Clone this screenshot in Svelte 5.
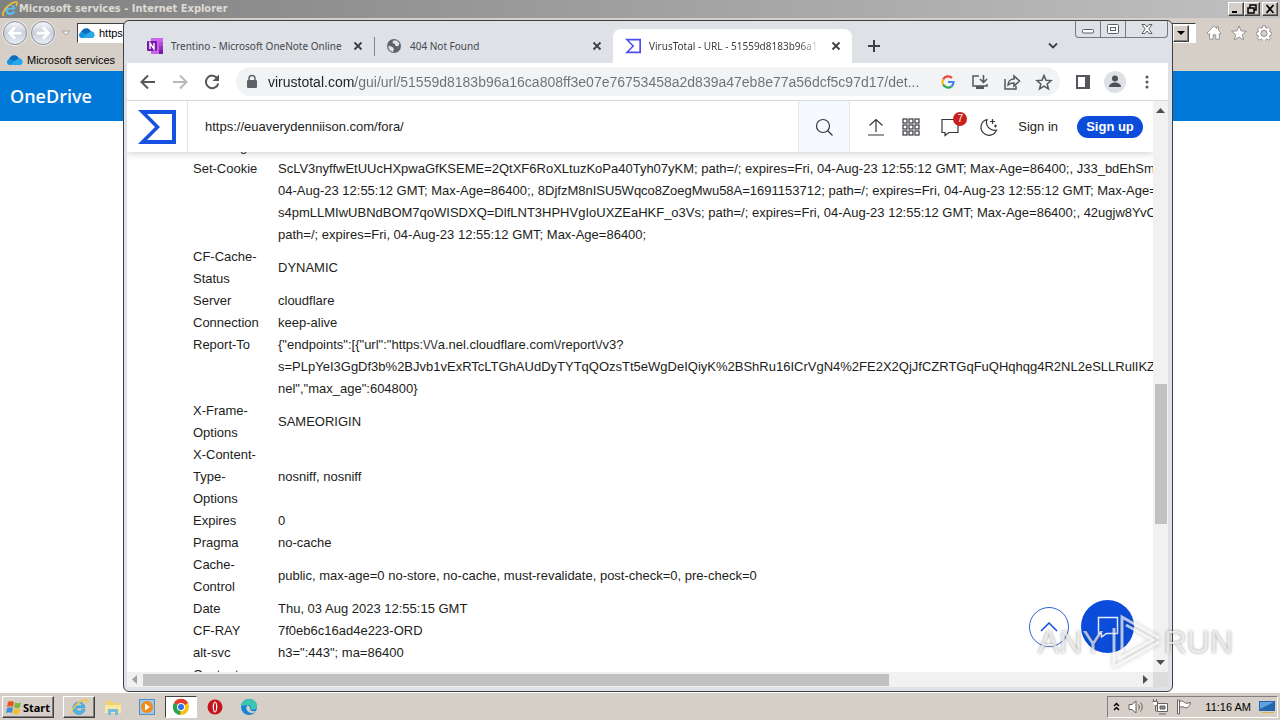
<script>
  let pageUrl = $state('https://euaverydenniison.com/fora/');
  let address = $state('virustotal.com/gui/url/51559d8183b96a16ca808ff3e07e76753458a2d839a47eb8e77a56dcf5c97d17/det...');

  const headers = [
    { name: ['Encoding'], value: [''] },
    {
      name: ['Set-Cookie'],
      top: true,
      value: [
        'ScLV3nyffwEtUUcHXpwaGfKSEME=2QtXF6RoXLtuzKoPa40Tyh07yKM; path=/; expires=Fri, 04-Aug-23 12:55:12 GMT; Max-Age=86400;, J33_bdEhSmc',
        '04-Aug-23 12:55:12 GMT; Max-Age=86400;, 8DjfzM8nISU5Wqco8ZoegMwu58A=1691153712; path=/; expires=Fri, 04-Aug-23 12:55:12 GMT; Max-Age=',
        's4pmLLMIwUBNdBOM7qoWISDXQ=DlfLNT3HPHVgIoUXZEaHKF_o3Vs; path=/; expires=Fri, 04-Aug-23 12:55:12 GMT; Max-Age=86400;, 42ugjw8YvCTY',
        'path=/; expires=Fri, 04-Aug-23 12:55:12 GMT; Max-Age=86400;'
      ]
    },
    { name: ['CF-Cache-', 'Status'], value: ['DYNAMIC'] },
    { name: ['Server'], value: ['cloudflare'] },
    { name: ['Connection'], value: ['keep-alive'] },
    {
      name: ['Report-To'],
      top: true,
      value: [
        '{"endpoints":[{"url":"https:\\/\\/a.nel.cloudflare.com\\/report\\/v3?',
        's=PLpYeI3GgDf3b%2BJvb1vExRTcLTGhAUdDyTYTqQOzsTt5eWgDeIQiyK%2BShRu16ICrVgN4%2FE2X2QjJfCZRTGqFuQHqhqg4R2NL2eSLLRulIKZ31y',
        'nel","max_age":604800}'
      ]
    },
    { name: ['X-Frame-', 'Options'], value: ['SAMEORIGIN'] },
    { name: ['X-Content-', 'Type-', 'Options'], value: ['nosniff, nosniff'] },
    { name: ['Expires'], value: ['0'] },
    { name: ['Pragma'], value: ['no-cache'] },
    { name: ['Cache-', 'Control'], value: ['public, max-age=0 no-store, no-cache, must-revalidate, post-check=0, pre-check=0'] },
    { name: ['Date'], value: ['Thu, 03 Aug 2023 12:55:15 GMT'] },
    { name: ['CF-RAY'], value: ['7f0eb6c16ad4e223-ORD'] },
    { name: ['alt-svc'], value: ['h3=":443"; ma=86400'] },
    { name: ['Content-', 'Type'], value: [''] }
  ];
</script>

{#snippet cloud()}
  <svg class="cloud" viewBox="0 0 16 12" aria-hidden="true">
    <path d="M4 10a4 4 0 0 1-.5-7A5 5 0 0 1 12 4.500a3.300 3.300 0 0 1 .7 6.500H4z" fill="#0f6cbd" />
    <path d="M0 8a3 3 0 0 1 3.500-3l9 6H3A3 3 0 0 1 0 8z" fill="#1490df" />
    <path d="M7 7l5-2.500A3.300 3.300 0 0 1 13 11H4z" fill="#28a8ea" />
  </svg>
{/snippet}

{#snippet closeTab(title)}
  <button class="close" aria-label="Close {title}">
    <svg width="16" height="16" viewBox="0 0 16 16"><path d="M4.500 4.500l7 7M11.500 4.500l-7 7" stroke="#3c4043" stroke-width="1.800" /></svg>
  </button>
{/snippet}

{#snippet sigma(size, color)}
  <svg width={size} height={size} viewBox="0 0 38 38" aria-hidden="true">
    <path fill-rule="evenodd" d="M0 2h38v34H0l17-17zM9 6l13 13L9 32h25V6z" fill={color} />
  </svg>
{/snippet}

<div class="desktop">
  <section class="ie">
    <header class="ie-title">
      <svg width="16" height="16" viewBox="0 0 16 16" aria-hidden="true">
        <path d="M13 8.500H5.500a3 3 0 0 0 5.500 1.800h2.500A5.300 5.300 0 1 1 13.400 7z M5.600 6.900h5.100a2.600 2.600 0 0 0-5.100 0z" fill="#58bdf3" />
        <path d="M1.500 15C-1 12 6 2 14 1c2 0 1 3 0 4" fill="none" stroke="#f2c32d" stroke-width="1.500" />
      </svg>
      <h1>Microsoft services - Internet Explorer</h1>
      <div class="classic-buttons">
        <button aria-label="Minimize"><svg viewBox="0 0 12 10"><path d="M2 8h5" stroke="#000" stroke-width="2" /></svg></button>
        <button aria-label="Restore"><svg viewBox="0 0 12 10"><path d="M4 4V1h6v5H8M2 4h6v5H2z" fill="none" stroke="#000" stroke-width="1.500" /></svg></button>
        <button class="apart" aria-label="Close"><svg viewBox="0 0 12 10"><path d="M2.500 1l7 8M9.500 1l-7 8" stroke="#000" stroke-width="1.800" /></svg></button>
      </div>
    </header>

    <div class="ie-nav">
      <button class="round" aria-label="Back"><svg viewBox="0 0 24 24"><path d="M19 12H7M12 6l-6 6 6 6" /></svg></button>
      <button class="round" aria-label="Forward"><svg viewBox="0 0 24 24"><path d="M5 12h12M12 6l6 6-6 6" /></svg></button>
      <svg class="recent" width="10" height="6" viewBox="0 0 10 6" aria-hidden="true"><path d="M1 1h8L5 5z" fill="#eee" stroke="#aaa59d" /></svg>
      <div class="ie-address">
        {@render cloud()}
        <input aria-label="Address" value="https://" />
        <button class="drop" aria-label="Show addresses"><svg width="8" height="4" viewBox="0 0 8 4"><path d="M0 0h8L4 4z" /></svg></button>
      </div>
      <div class="ie-tools">
        <button aria-label="Home"><svg viewBox="0 0 18 18"><path d="M1 9l8-8 3 3V2h2v4l3 3-1 1.500-1-1V16h-4v-5H8v5H4V9.500l-1 1z" /></svg></button>
        <button aria-label="Favorites"><svg viewBox="0 0 18 18"><path d="M9 1l2.300 5.600 6 .4-4.600 3.900 1.500 5.900L9 13.600l-5.200 3.200 1.500-5.900L.7 7l6-.4z" /></svg></button>
        <button aria-label="Tools"><svg viewBox="0 0 18 18"><path fill-rule="evenodd" d="M7.500 1h3l.4 2 1.600.7 1.700-1.100 2.100 2.100-1.100 1.700.6 1.600 2 .4v2.600l-2 .5-.6 1.600 1.100 1.700-2.100 2.100-1.700-1.100-1.600.6-.4 2h-3l-.4-2-1.600-.6-1.700 1.100-2.100-2.100 1.100-1.700-.6-1.600-2-.5V8.400l2-.4.6-1.600-1.100-1.700 2.100-2.100 1.700 1.100L7.100 3zM9 6a3.500 3.500 0 1 0 0 7 3.500 3.500 0 0 0 0-7z" /></svg></button>
      </div>
    </div>

    <div class="ie-favorites">
      {@render cloud()}
      <a href="#services">Microsoft services</a>
    </div>

    <div class="onedrive">OneDrive</div>
    <div class="ie-page"></div>
  </section>

  <section class="chrome">
    <div class="tabs">
      <div class="tab">
        <svg width="16" height="16" viewBox="0 0 16 16" aria-hidden="true">
          <path d="M4 0h12v16H4z" fill="#ca64ea" /><path d="M12 4h4v4h-4z" fill="#ae4bd5" /><path d="M12 8h4v4h-4z" fill="#9332bf" /><path d="M12 12h4v4h-4z" fill="#7719aa" />
          <rect y="3" width="10" height="10" rx="1" fill="#7719aa" /><path d="M3 11V5l4 6V5" fill="none" stroke="#fff" stroke-width="1.400" />
        </svg>
        <span class="tab-title">Trentino - Microsoft OneNote Online</span>
        {@render closeTab('Trentino')}
      </div>
      <div class="tab divided">
        <svg width="16" height="16" viewBox="0 0 16 16" aria-hidden="true">
          <circle cx="8" cy="8" r="7" fill="#5f6368" />
          <path d="M2.500 7.500l4 1.500 1.500 2-1 3a6 6 0 0 1-4.500-6.500zM7 2.500h4l2.500 3-1.500 3-3-1V6L6.500 5z" fill="#dee1e6" />
        </svg>
        <span class="tab-title">404 Not Found</span>
        {@render closeTab('404 Not Found')}
      </div>
      <div class="tab active">
        {@render sigma(16, '#4a4ff0')}
        <span class="tab-title fade">VirusTotal - URL - 51559d8183b96a1</span>
        {@render closeTab('VirusTotal')}
      </div>
      <button class="new-tab" aria-label="New tab"><svg width="14" height="14" viewBox="0 0 14 14"><path d="M7 1v12M1 7h12" stroke="#3c4043" stroke-width="2" /></svg></button>
      <button class="tab-search" aria-label="Search tabs"><svg width="12" height="8" viewBox="0 0 12 8"><path d="M2 1.500l4 4 4-4" fill="none" stroke="#3c4043" stroke-width="1.800" /></svg></button>
      <div class="frame-buttons">
        <button aria-label="Minimize"><svg width="14" height="12" viewBox="0 0 14 12"><rect x="1.500" y="6.500" width="11" height="3.500" rx="1" /></svg></button>
        <button aria-label="Maximize"><svg width="14" height="12" viewBox="0 0 14 12"><rect x="1.500" y="1.500" width="11" height="9" rx="1" /><rect x="4.500" y="4.500" width="5" height="3" /></svg></button>
        <button class="wide" aria-label="Close"><svg width="14" height="12" viewBox="0 0 14 12"><path d="M2 1.500h3L7 4l2-2.500h3L8.800 6l3.200 4.500H9L7 8l-2 2.500H2L5.200 6z" /></svg></button>
      </div>
    </div>

    <div class="toolbar">
      <button aria-label="Back"><svg viewBox="0 0 20 20"><path d="M17 10H4M10 3.500L3.500 10l6.500 6.500" /></svg></button>
      <button class="off" aria-label="Forward"><svg viewBox="0 0 20 20"><path d="M3 10h13M10 3.500l6.500 6.500-6.500 6.500" /></svg></button>
      <button aria-label="Reload"><svg viewBox="0 0 20 20"><path d="M15.500 6.500A6.300 6.300 0 1 0 16.300 11.500" /><path d="M17 2.500V9h-6.500z" class="solid" /></svg></button>
      <div class="omnibox">
        <svg width="16" height="16" viewBox="0 0 16 16" aria-hidden="true"><rect x="3" y="6" width="10" height="8" rx="1" fill="#5f6368" /><path d="M5 6.500V4.500a3 3 0 0 1 6 0v2" fill="none" stroke="#5f6368" stroke-width="1.500" /></svg>
        <input aria-label="Address and search bar" bind:value={address} />
        <button aria-label="Search with Google">
          <svg viewBox="0 0 20 20" class="google">
            <path d="M14 6A5.500 5.500 0 0 0 5.100 7.500" stroke="#ea4335" /><path d="M5.100 7.500a5.500 5.500 0 0 0 0 5" stroke="#fbbc05" /><path d="M5.100 12.500a5.500 5.500 0 0 0 8.400 1.800" stroke="#34a853" /><path d="M10 10h5.500a5.500 5.500 0 0 1-2 4.300" stroke="#4285f4" />
          </svg>
        </button>
        <button aria-label="Install app"><svg viewBox="0 0 20 20"><path d="M9 4H3v10h14v-2M13.500 3v7M10 7l3.500 3.500L17 7" class="line" /><path d="M6 14h8v3H6z" class="solid" /></svg></button>
        <button aria-label="Share"><svg viewBox="0 0 20 20"><path d="M3 7v10h11v-3M6 13c0-4 3-6 6-6V4l5.500 5-5.500 5v-3c-3 0-4.500.5-6 2z" class="line" /></svg></button>
        <button aria-label="Bookmark"><svg viewBox="0 0 20 20"><path d="M10 3.500l2 4.700 5 .4-3.800 3.300 1.200 5L10 14.200l-4.400 2.700 1.200-5L3 8.600l5-.4z" class="line" /></svg></button>
      </div>
      <button aria-label="Side panel"><svg viewBox="0 0 20 20"><rect x="4" y="4" width="12" height="12" /><path d="M12 4h4v12h-4z" class="solid" /></svg></button>
      <button class="avatar" aria-label="Profile"><svg viewBox="0 0 22 22"><circle cx="11" cy="7.500" r="3" /><path d="M5 16c0-6 12-6 12 0z" /></svg></button>
      <button aria-label="Menu"><svg viewBox="0 0 20 20" class="dots"><circle cx="10" cy="5" r="1.500" /><circle cx="10" cy="10" r="1.500" /><circle cx="10" cy="15" r="1.500" /></svg></button>
    </div>

    <div class="viewport">
      <main class="page">
        <header class="vt-header">
          <a class="vt-logo" href="#home" aria-label="VirusTotal">{@render sigma(38, '#1651e0')}</a>
          <input class="vt-input" aria-label="Search" bind:value={pageUrl} />
          <button class="vt-search" aria-label="Run search"><svg width="20" height="20" viewBox="0 0 20 20"><circle cx="9" cy="9" r="6.500" /><path d="M13.500 13.500l5 5" /></svg></button>
          <nav class="vt-nav">
            <div class="vt-pair">
              <button aria-label="Upload"><svg viewBox="0 0 20 20"><path d="M2 18h16M10 15V2.500M3.500 8.500l6.500-6 6.500 6" /></svg></button>
              <button aria-label="Apps">
                <svg viewBox="0 0 20 20">
                  {#each [2, 8, 14] as y}
                    {#each [2, 8, 14] as x}
                      <rect {x} {y} width="4" height="4" />
                    {/each}
                  {/each}
                </svg>
              </button>
            </div>
            <button class="comments" aria-label="Notifications">
              <svg viewBox="0 0 20 20"><path d="M2 2.500h16v13H9L5 18.500v-3H2z" /></svg>
              <span class="badge">7</span>
            </button>
            <button aria-label="Dark mode"><svg viewBox="0 0 20 20"><path d="M8 2.500A8 8 0 1 0 17.500 13 8 8 0 0 1 8 2.500zM13.500 2v5M11 4.500h5M16.500 7.500v3M15 9h3" /></svg></button>
            <a class="sign-in" href="#signin">Sign in</a>
            <button class="sign-up">Sign up</button>
          </nav>
        </header>

        <div class="details">
          <table>
            <tbody>
              {#each headers as row}
                <tr class:top={row.top}>
                  <th scope="row">{#each row.name as line}<div>{line}</div>{/each}</th>
                  <td>{#each row.value as line}<div>{line}</div>{/each}</td>
                </tr>
              {/each}
            </tbody>
          </table>
        </div>

        <div class="floating">
          <button class="to-top" aria-label="Back to top"><svg width="20" height="20" viewBox="0 0 20 20"><path d="M2 14l8-8 8 8" /></svg></button>
          <button class="chat" aria-label="Open chat"><svg width="22" height="22" viewBox="0 0 22 22"><path d="M1.500 1.500h19v16h-11l-5 3.500v-3.500h-3z" /></svg></button>
        </div>
      </main>

      <div class="scroll vertical">
        <svg width="9" height="5" viewBox="0 0 9 5"><path d="M0 5h9L4.500 0z" /></svg>
        <div class="track"><div class="thumb"></div></div>
        <svg width="9" height="5" viewBox="0 0 9 5"><path d="M0 0h9L4.500 5z" /></svg>
      </div>
      <div class="scroll horizontal">
        <svg width="5" height="9" viewBox="0 0 5 9"><path d="M5 0v9L0 4.500z" fill="#a0a0a0" /></svg>
        <div class="track"><div class="thumb"></div></div>
        <svg width="5" height="9" viewBox="0 0 5 9"><path d="M0 0v9l5-4.500z" /></svg>
      </div>
      <div class="corner"></div>
    </div>
  </section>

  <div class="watermark">
    <span>ANY</span>
    <svg width="60" height="66" viewBox="0 0 60 66" aria-hidden="true"><path d="M18 40V8l37 21M18 14v30M10 19v39M10 58l45-25M22 16l27 15-31 17" /></svg>
    <span>RUN</span>
  </div>

  <footer class="taskbar">
    <button class="start">
      <svg width="16" height="16" viewBox="0 0 16 16" aria-hidden="true">
        <path d="M2 3c2-1.500 4-1 6 0L7 8C5 7 3 7 1 8z" fill="#e8562a" /><path d="M9 3.500c2 1 4 1 6 0l-1 5c-2 1-4 1-6 0z" fill="#7db943" /><path d="M1 9c2-1 4-1 6 0l-1 5c-2-1-4-1-6 0z" fill="#3c8fd8" /><path d="M8 9.500c2 1 4 1 6 0l-1 5c-2 1-4 1-6 0z" fill="#f5bd2b" />
      </svg>
      Start
    </button>
    <button class="app raised" aria-label="Internet Explorer">
      <svg viewBox="0 0 18 18"><path d="M15 10H6a3.200 3.200 0 0 0 6 1.500h3A6.200 6.200 0 1 1 15 9z M6 7.800h6a3 3 0 0 0-6 0z" fill="#4fb5ea" stroke="#2d87bd" stroke-width=".5" /><path d="M2 16.500C0 13 7 3 16 1.500c2 .5 1 3 0 4" fill="none" stroke="#f2c84b" stroke-width="1.500" /></svg>
    </button>
    <button class="app" aria-label="Explorer">
      <svg viewBox="0 0 18 18"><path d="M2 3h6l1 2h7v9H2z" fill="#f0d468" /><path d="M1 7h16v8H1z" fill="#f8e8a0" /><path d="M4 17v-6h10v6h-3v-3H7v3z" fill="#74bde0" /></svg>
    </button>
    <button class="app" aria-label="Media Player">
      <svg viewBox="0 0 18 18"><rect x="1.500" y="1.500" width="15" height="15" fill="#9fc9ec" stroke="#588fbf" /><circle cx="9" cy="9" r="6" fill="#f28a16" /><path d="M7 5.500v7l5-3.500z" fill="#fff" /></svg>
    </button>
    <button class="app pressed" aria-label="Chrome">
      <svg viewBox="0 0 18 18"><circle cx="9" cy="9" r="8" fill="#fbc116" /><path d="M9 9L2 5a8 8 0 0 1 14 0z" fill="#e33b2e" /><path d="M9 9l-1 8A8 8 0 0 1 2 5z" fill="#28a352" /><circle cx="9" cy="9" r="4" fill="#fff" /><circle cx="9" cy="9" r="3" fill="#2e74e8" /></svg>
    </button>
    <button class="app" aria-label="Opera">
      <svg viewBox="0 0 18 18"><circle cx="9" cy="9" r="7.500" fill="#c5151b" /><ellipse cx="9" cy="9" rx="2.300" ry="5.500" fill="#fff" /><ellipse cx="9" cy="9" rx="1" ry="4.500" fill="#c5151b" /></svg>
    </button>
    <button class="app" aria-label="Edge">
      <svg viewBox="0 0 18 18"><circle cx="9" cy="9" r="8" fill="#1681d8" /><path d="M1 8C2-1 17-1 17 8c0 4-5 4.500-6.500 3 1.500-2 0-4-2.500-4-3 0-6 1-7 1z" fill="#3ac6b0" /><path d="M8 7c-3 2-2 7 3 8 2 .5 4-.5 5-2-4 1-7-1-5.500-3z" fill="#d4d0c8" /></svg>
    </button>
    <div class="tray">
      <svg width="7" height="10" viewBox="0 0 7 10" aria-hidden="true"><path d="M1 4l2.500-2.500L6 4M1 8l2.500-2.500L6 8" fill="none" stroke="#000" stroke-width="1.500" /></svg>
      <svg class="mono" viewBox="0 0 16 16" aria-hidden="true"><path d="M1 5.500h3L8 2v12l-4-3.500H1z" /><path d="M10.500 5.500q2 2.500 0 5M12.500 3.500q3.500 4.500 0 9" fill="none" /></svg>
      <svg class="mono" viewBox="0 0 16 16" aria-hidden="true"><path d="M5.500 4.500h10v8h-10zM7 15h7M.5 2.500h5v4h-2V12h2M1.500 0v2M4.500 0v2" /><path d="M8 7h5v3H8z" fill="#888" /></svg>
      <svg class="mono" viewBox="0 0 16 16" aria-hidden="true"><path d="M1.500 1h2v14h-2zM3.500 2.500c3-1 4 0 5 1s3 1 6 0c-1 5-4 6-6 5s-3-1-5 0z" /></svg>
      <time>11:16 AM</time>
      <svg width="16" height="14" viewBox="0 0 16 14" aria-hidden="true"><path d="M0 1h16v10H0z" fill="#2465b0" /><path d="M1 2h14L1 9z" fill="#5ea2df" /><path d="M3 12h12v1H3z" fill="#d9b44a" /></svg>
    </div>
  </footer>
</div>

<style>
  :global(body) {
    margin: 0;
  }

  .desktop {
    --ui: "Noto Sans", Tahoma, sans-serif;
    --face: #d5cfc7;
    position: relative;
    display: flex;
    flex-direction: column;
    height: 100vh;
    overflow: hidden;
    font-family: "Liberation Sans", Tahoma, sans-serif;
    font-size: 11px;
    color: #000;
  }

  button {
    display: grid;
    place-content: center;
    padding: 0;
    border: 0;
    background: none;
    font: inherit;
    color: inherit;
  }

  input {
    min-width: 0;
    padding: 0;
    border: 0;
    outline: 0;
    background: none;
    font: inherit;
  }

  a {
    color: inherit;
    text-decoration: none;
  }

  svg {
    display: block;
    flex: none;
  }

  .cloud {
    width: 16px;
    height: 12px;
  }

  /* Internet Explorer */
  .ie {
    display: flex;
    flex-direction: column;
    flex: 1;
    background: var(--face);
  }

  .ie-title {
    display: flex;
    align-items: center;
    gap: 1px;
    height: 18px;
    padding: 0 2px;
    background: linear-gradient(90deg, #808080, #c0c0c0);
  }

  .ie-title h1 {
    margin: 0;
    font-family: "DejaVu Sans Condensed", "DejaVu Sans", sans-serif;
    font-size: 11px;
    line-height: 16px;
    color: #dedad4;
  }

  .classic-buttons {
    display: flex;
    margin-left: auto;
  }

  .classic-buttons button,
  .drop,
  .start,
  .raised {
    background: var(--face);
    border: 1px solid;
    border-color: #fff #404040 #404040 #fff;
    box-shadow: inset -1px -1px #808080;
  }

  .classic-buttons button {
    width: 16px;
    height: 14px;
  }

  .classic-buttons svg {
    width: 12px;
    height: 10px;
  }

  .classic-buttons .apart {
    margin-left: 2px;
  }

  .ie-nav {
    display: flex;
    align-items: center;
    gap: 4px;
    height: 30px;
    padding: 0 8px 0 3px;
  }

  .round {
    width: 24px;
    height: 24px;
    border: 1px solid #8e9299;
    border-radius: 50%;
    background: linear-gradient(#f4f6f9, #c9d0dc 50%, #e9eef6);
    box-shadow: 0 0 0 1px #e9e7e3;
  }

  .round svg {
    width: 22px;
    height: 22px;
    fill: none;
    stroke: #fff;
    stroke-width: 3;
  }

  .recent {
    margin: 0 2px;
  }

  .ie-address {
    display: flex;
    align-items: center;
    flex: 1;
    gap: 4px;
    height: 20px;
    padding: 0 6px 0 1px;
    box-sizing: border-box;
    border: 1px solid;
    border-color: #404040 #fff #fff #404040;
    background: #fff;
  }

  .ie-address input {
    flex: 1;
  }

  .drop {
    width: 16px;
    height: 17px;
  }

  .ie-tools {
    display: flex;
    gap: 9px;
    margin-left: 6px;
  }

  .ie-tools svg {
    width: 16px;
    height: 16px;
    fill: #fff;
    stroke: #8d8a85;
  }

  .ie-favorites {
    display: flex;
    align-items: center;
    gap: 4px;
    height: 23px;
    padding-left: 7px;
  }

  .onedrive {
    height: 50px;
    padding-left: 10px;
    background: #0078d7;
    color: #fff;
    font: 600 18px/50px "Open Sans", sans-serif;
  }

  .ie-page {
    flex: 1;
    background: #fff;
  }

  /* Chrome window */
  .chrome {
    position: absolute;
    inset: 20px 107px 28px 123px;
    display: flex;
    flex-direction: column;
    padding: 0 4px 4px 3px;
    border: 1px solid #3c3f44;
    border-radius: 6px;
    background: #dee1e6;
    overflow: hidden;
  }

  .tabs {
    display: flex;
    align-items: flex-end;
    height: 42px;
    padding-left: 8px;
    color: #45484d;
    font-family: var(--ui);
    font-size: 10px;
  }

  .tab {
    display: flex;
    align-items: center;
    gap: 8px;
    flex: 0 1 239px;
    min-width: 0;
    height: 34px;
    padding: 0 8px 0 12px;
    box-sizing: border-box;
    border-radius: 8px 8px 0 0;
  }

  .tab.divided {
    background: linear-gradient(#80868b, #80868b) 0 8px / 1px 19px no-repeat;
  }

  .tab.active {
    background: #fff;
    color: #3c4043;
  }

  .tab-title {
    flex: 1;
    overflow: hidden;
    white-space: nowrap;
  }

  .fade {
    mask-image: linear-gradient(90deg, #000 88%, transparent);
  }

  .new-tab {
    width: 28px;
    height: 34px;
    margin-left: 8px;
  }

  .tab-search {
    width: 28px;
    height: 34px;
    margin-left: auto;
  }

  .frame-buttons {
    display: flex;
    align-self: flex-start;
    margin-left: 8px;
    border: 1px solid #75787d;
    border-top: 0;
    border-radius: 0 0 4px 4px;
  }

  .frame-buttons button {
    width: 25px;
    height: 16px;
    border-right: 1px solid #75787d;
  }

  .frame-buttons .wide {
    width: 41px;
    border: 0;
  }

  .frame-buttons svg {
    fill: #fff;
    stroke: #5c5f66;
  }

  .toolbar {
    display: flex;
    align-items: center;
    height: 37px;
    padding: 0 5px;
    border-bottom: 1px solid #d5d7da;
    background: #fff;
  }

  .toolbar button {
    width: 32px;
    height: 28px;
    flex: none;
  }

  .toolbar button svg {
    width: 20px;
    height: 20px;
    fill: none;
    stroke: #54575b;
    stroke-width: 2;
  }

  .toolbar .off svg {
    stroke: #b6b8bb;
  }

  .toolbar .solid {
    fill: #54575b;
    stroke: none;
  }

  .toolbar .line {
    stroke-width: 1.5;
  }

  .toolbar .google path {
    stroke-width: 2.2;
  }

  .toolbar svg.dots {
    fill: #54575b;
    stroke: none;
  }

  .toolbar .avatar svg {
    width: 22px;
    height: 22px;
    border-radius: 50%;
    background: #dee1e6;
    fill: #4d5156;
    stroke: none;
  }

  .omnibox {
    display: flex;
    align-items: center;
    gap: 8px;
    flex: 1;
    min-width: 0;
    height: 29px;
    margin: 0 7px 0 8px;
    padding-left: 8px;
    border-radius: 15px;
    background: #f1f3f4;
  }

  .omnibox input {
    flex: 1;
    height: 24px;
    font-size: 14px;
    color: #6d7074;
    background: linear-gradient(90deg, #202124 87px, #6d7074 87px) text;
    -webkit-text-fill-color: transparent;
  }

  .omnibox button {
    margin-left: -8px;
  }

  .omnibox input + button {
    margin-left: -6px;
  }

  .viewport {
    display: grid;
    grid-template: minmax(0, 1fr) 15px / minmax(0, 1fr) 15px;
    flex: 1;
    min-height: 0;
  }

  /* VirusTotal page */
  .page {
    position: relative;
    display: flex;
    flex-direction: column;
    background: #fff;
    font-size: 13px;
    color: #1c1d20;
    overflow: hidden;
  }

  .vt-header {
    z-index: 1;
    display: flex;
    height: 51px;
    flex: none;
    box-shadow: 0 1px 8px #0003;
    background: #fff;
  }

  .vt-logo {
    display: grid;
    place-content: center;
    width: 60px;
    border-right: 1px solid #e3e6ea;
  }

  .vt-input {
    flex: 1;
    padding-left: 17px;
    color: inherit;
  }

  .vt-search {
    width: 52px;
    border: solid #e3e6ea;
    border-width: 0 1px;
    background: #f6f9fd;
  }

  .vt-search svg,
  .vt-nav svg {
    width: 20px;
    height: 20px;
    fill: none;
    stroke: #34373c;
    stroke-width: 1.2;
  }

  .vt-nav {
    display: flex;
    align-items: center;
    gap: 19px;
    padding: 0 10px 0 16px;
  }

  .vt-pair {
    display: flex;
    gap: 15px;
  }

  .comments {
    position: relative;
  }

  .badge {
    position: absolute;
    right: -7px;
    top: -5px;
    width: 14px;
    border-radius: 7px;
    background: #c9201d;
    color: #fff;
    font-size: 10px;
    line-height: 14px;
  }

  .sign-up {
    width: 66px;
    height: 22px;
    border-radius: 11px;
    background: #0b4dda;
    color: #fff;
    font-weight: bold;
  }

  .details {
    flex: 1;
    min-height: 0;
    overflow: hidden;
  }

  table {
    margin: -16px 0 0 66px;
    border-collapse: collapse;
    line-height: 22px;
    white-space: nowrap;
  }

  th,
  td {
    padding: 0;
    font-weight: normal;
    text-align: left;
    vertical-align: middle;
  }

  th {
    min-width: 85px;
  }

  .top th {
    vertical-align: top;
  }

  .floating {
    position: absolute;
    right: 19px;
    bottom: 19px;
    display: flex;
    align-items: center;
    gap: 12px;
  }

  .floating svg {
    fill: none;
    stroke: #0b4dda;
    stroke-width: 1.5;
  }

  .to-top {
    width: 40px;
    height: 40px;
    border: 1px solid #2f62cf;
    border-radius: 50%;
    background: #fff;
  }

  .chat {
    width: 53px;
    height: 53px;
    border-radius: 50%;
    background: #0b4dda;
  }

  .chat svg {
    stroke: #e4edff;
  }

  .scroll {
    display: flex;
    align-items: center;
    padding: 7px 0;
    background: #f1f1f1;
  }

  .vertical {
    flex-direction: column;
  }

  .horizontal {
    padding: 0 5px;
  }

  .scroll svg {
    fill: #505050;
  }

  .track {
    display: flex;
    flex: 1;
  }

  .vertical .track {
    flex-direction: column;
    padding-top: 271px;
  }

  .horizontal .track {
    padding: 0 6px;
  }

  .thumb {
    width: 12px;
    height: 140px;
    background: #c1c1c1;
  }

  .horizontal .thumb {
    width: 75%;
    height: 12px;
  }

  .corner {
    background: #dcdcdc;
  }

  .watermark {
    position: absolute;
    right: 47px;
    bottom: 45px;
    display: flex;
    align-items: center;
    color: #ffffffb0;
    font-size: 32px;
    text-shadow: 0 0 3px #0006;
    pointer-events: none;
  }

  .watermark svg {
    fill: none;
    stroke: #ffffffb0;
    stroke-width: 3;
    filter: drop-shadow(0 0 2px #0005);
  }

  /* Taskbar */
  .taskbar {
    display: flex;
    align-items: center;
    gap: 2px;
    height: 28px;
    padding: 2px 2px 0;
    box-sizing: border-box;
    background: var(--face);
    box-shadow: inset 0 1px #fff;
  }

  .start {
    display: flex;
    align-items: center;
    gap: 1px;
    width: 52px;
    height: 22px;
    margin-right: 7px;
    padding: 0 1px;
    font-family: var(--ui);
    font-weight: bold;
  }

  .app {
    width: 32px;
    height: 22px;
  }

  .app svg {
    width: 18px;
    height: 18px;
  }

  .pressed {
    background: #fff;
    border: 1px solid;
    border-color: #404040 #fff #fff #404040;
  }

  .tray {
    display: flex;
    align-items: center;
    gap: 8px;
    height: 22px;
    margin-left: auto;
    padding: 0 2px 0 5px;
    box-sizing: border-box;
    border: 1px solid;
    border-color: #808080 #fff #fff #808080;
  }

  .mono {
    width: 16px;
    height: 16px;
    fill: #fff;
    stroke: #66625d;
  }

  .tray time {
    margin: 0 0 0 5px;
  }
</style>
